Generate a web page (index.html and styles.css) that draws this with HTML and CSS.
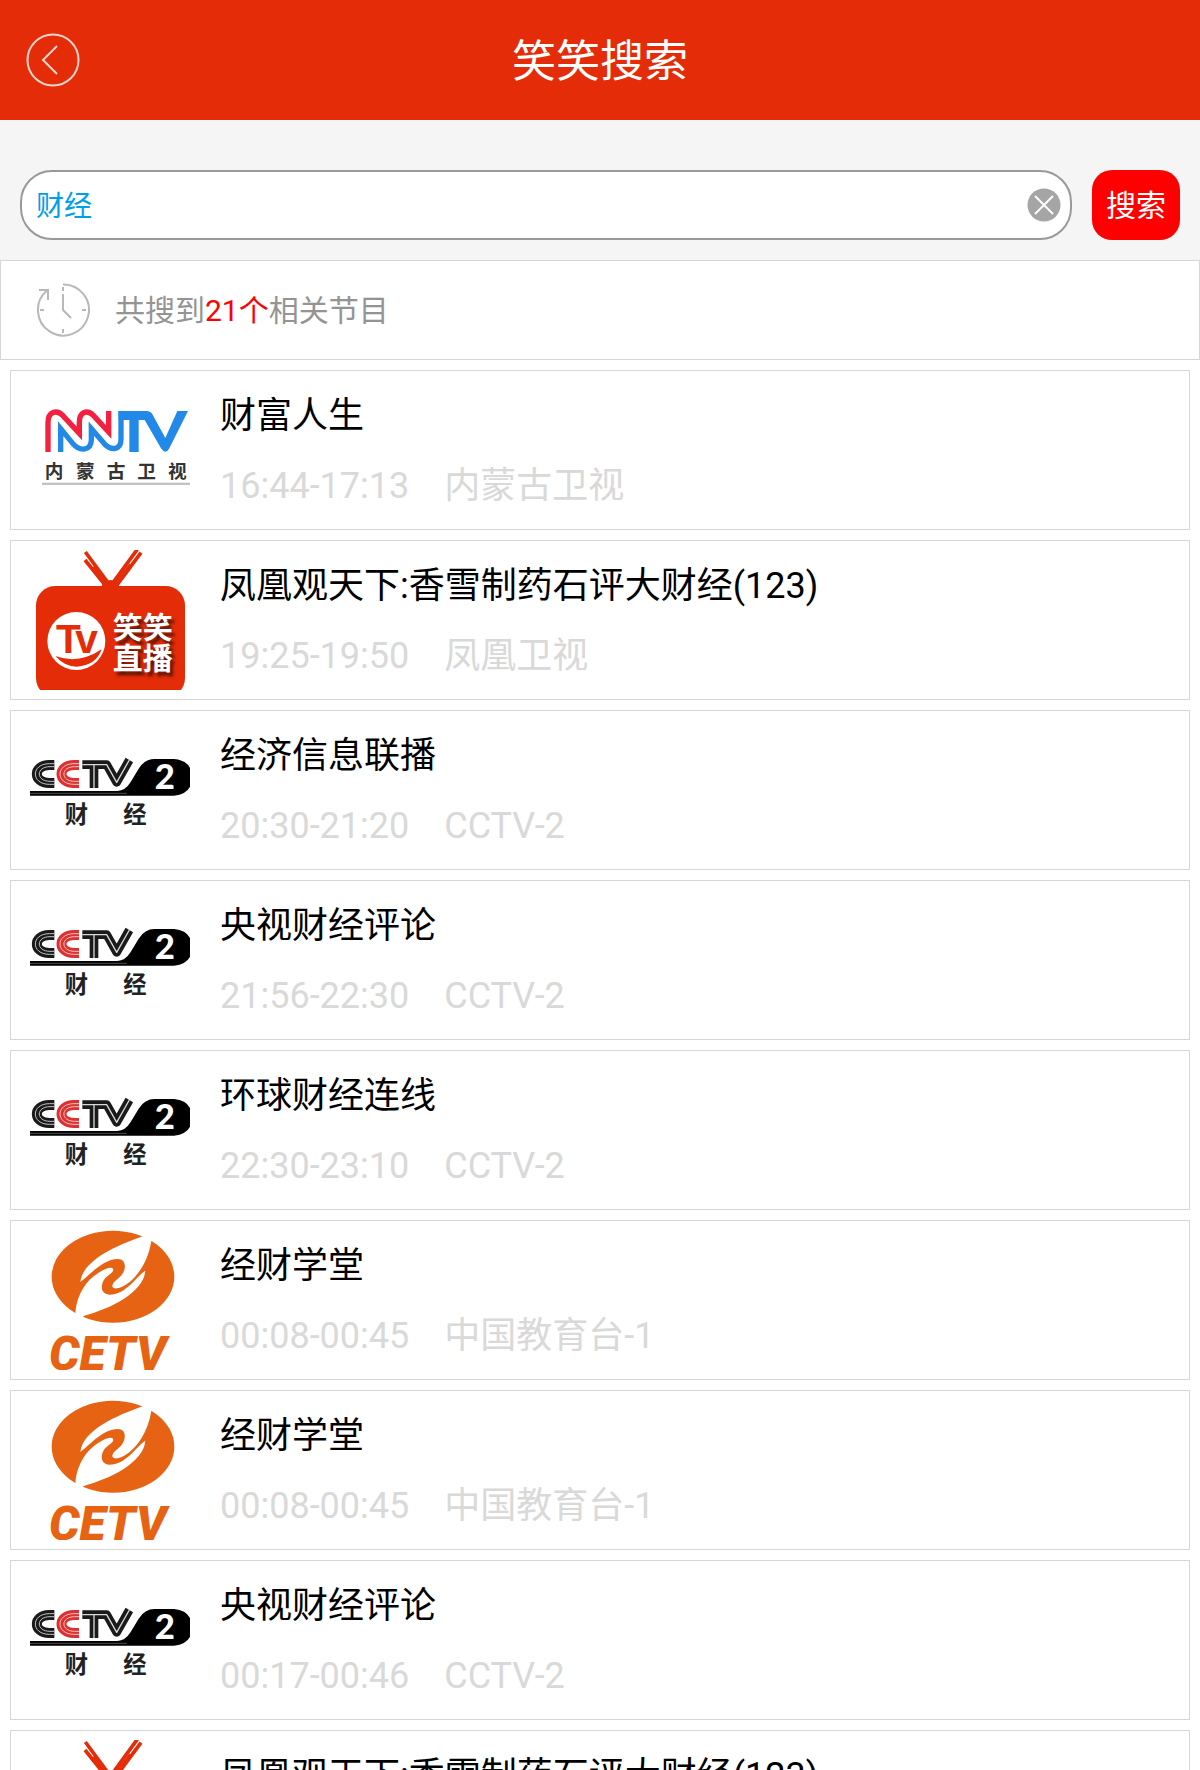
FILE: index.html
```html
<!DOCTYPE html>
<html lang="zh-CN">

    <head>
        <meta charset="UTF-8">
        <meta name="viewport" content="width=device-width, initial-scale=1.0">
        <title>笑笑搜索</title>
        <link rel="stylesheet" href="styles.css">
    </head>

    <body>
        <!-- channel logos -->
        <svg class="sprite" aria-hidden="true">
            <symbol id="nmtv" viewBox="0 0 480 420">
                <g fill="none" stroke-width="16">
                    <path stroke="#f5203f" d="M54 216 V128 C54 94 80 88 98 106 L148 160 V128 C148 94 172 88 190 106 L236 156 V93"/>
                    <path stroke="#2389e8" d="M92 216 V146 L128 190 C150 216 184 212 184 180 V146 L222 190 C244 214 273 210 273 178 V93"/>
                </g>
                <path fill="#2389e8" d="M266 93 H350 Q362 93 368 104 L406 174 L442 93 H474 L418 205 Q407 226 393 205 L344 120 H326 V216 H298 V120 H266 Z"/>
                <g class="nmtv-name">
                    <text x="44" y="293">内</text>
                    <text x="138" y="293">蒙</text>
                    <text x="230" y="293">古</text>
                    <text x="322" y="293">卫</text>
                    <text x="414" y="293">视</text>
                </g>
                <rect x="36" y="308" width="444" height="7" fill="#c2c2c2"/>
            </symbol>

            <symbol id="xiaoxiao" viewBox="0 0 480 420">
                <g stroke="#e42c09" fill="none">
                    <path stroke-width="11" d="M166 6 L238 104 M165 30 L226 106 M322 -2 L246 102 M333 8 L260 106"/>
                    <path stroke-width="6" d="M190 50 L232 106 M300 42 L252 104"/>
                </g>
                <path fill="#e42c09" d="M214 110 Q222 90 242 90 Q262 90 268 110 Z"/>
                <rect x="18" y="108" width="447" height="334" rx="58" fill="#e42c09"/>
                <circle cx="139" cy="273" r="87" fill="#fff"/>
                <path fill="#e42c09" d="M76 318 Q146 344 215 298 Q199 346 140 350 Q104 350 76 318 Z"/>
                <g class="tv-mark">
                    <text x="78" y="310">T</text>
                    <text x="136" y="310">v</text>
                </g>
                <g class="xiaoxiao-name">
                    <text x="248" y="263">笑笑</text>
                    <text x="248" y="357">直播</text>
                </g>
            </symbol>

            <symbol id="cctv2" viewBox="0 0 480 420">
                <path fill="#000" d="M0 213 H262 Q286 212 302 186 L326 146 Q344 117 374 117 H432 Q486 122 486 172 Q486 222 432 227 H0 Z"/>
                <path stroke="#777" stroke-width="2" d="M0 220 H290"/>
                <g fill="none" stroke-linejoin="round">
                    <path stroke="#1a1a1a" stroke-width="30" d="M73 135 H58 C8 135 8 189 58 189 H73"/>
                    <path stroke="#c4c4c4" stroke-width="3" d="M73 131 H58 C2 131 2 193 58 193 H73 M73 140 H60 C17 140 17 184 60 184 H73"/>
                    <path stroke="#dd3030" stroke-width="30" d="M147 135 H132 C82 135 82 189 132 189 H147"/>
                    <path stroke="#f3c4c4" stroke-width="3" d="M147 131 H132 C76 131 76 193 132 193 H147 M147 140 H134 C91 140 91 184 134 184 H147"/>
                    <path stroke="#1a1a1a" stroke-width="26" d="M157 134 H230 L260 187 L298 120 M192 134 V204"/>
                    <path stroke="#d8d8d8" stroke-width="4" d="M157 134 H230 L260 187 L298 120 M192 134 V204"/>
                </g>
                <text x="374" y="206" class="cctv-number">2</text>
                <g class="cctv-name">
                    <text x="104" y="308">财</text>
                    <text x="280" y="308">经</text>
                </g>
            </symbol>

            <symbol id="cetv" viewBox="0 0 480 420">
                <ellipse cx="249" cy="140" rx="184" ry="138" fill="#e66313"/>
                <path fill="#fff" d="M350 14 L338 19 C262 46 158 90 151 156 C180 134 220 87 263 87 C292 87 288 122 273 137 C260 151 247 156 247 169 C250 181 276 174 294 160 C322 139 354 96 364 33 L378 22 Z"/>
                <path fill="#fff" d="M346 122 C317 141 288 194 238 194 C208 192 212 160 226 144 C242 130 252 126 249 117 C241 106 211 124 192 138 C158 164 138 208 136 250 L128 262 L150 272 L161 258 C238 236 340 190 346 122 Z"/>
                <text x="57" y="420" class="cetv-name">CETV</text>
            </symbol>
        </svg>

        <header class="header">
            <button class="back" aria-label="返回">
                <svg viewBox="0 0 54 54">
                    <circle cx="27" cy="27" r="25.5"/>
                    <path d="M31 13 L17 27 L31 41"/>
                </svg>
            </button>
            <h1>笑笑搜索</h1>
        </header>

        <form class="search">
            <div class="field">
                <input type="text" value="财经" aria-label="搜索节目">
                <button type="button" class="clear" aria-label="清除">
                    <svg viewBox="0 0 34 34">
                        <circle cx="17" cy="17" r="16.5"/>
                        <path d="M8 8 L26 26 M26 8 L8 26"/>
                    </svg>
                </button>
            </div>
            <button type="button" class="submit">搜索</button>
        </form>

        <div class="summary">
            <svg viewBox="0 0 54 54">
                <path d="M27 1.5 A25.5 25.5 0 1 1 11 7.5 M3 7 H12 V17"/>
                <path d="M27 4 V8 M27 11 V27 L35 35 M27 46 V50 M4 27 H8 M46 27 H50"/>
            </svg>
            <p>共搜到<em>21个</em>相关节目</p>
        </div>

        <ul class="list">
            <li class="item">
                <svg class="logo"><use href="#nmtv"/></svg>
                <div class="info">
                    <h2>财富人生</h2>
                    <p><span>16:44-17:13</span><span>内蒙古卫视</span></p>
                </div>
            </li>
            <li class="item">
                <svg class="logo"><use href="#xiaoxiao"/></svg>
                <div class="info">
                    <h2>凤凰观天下:香雪制药石评大财经(123)</h2>
                    <p><span>19:25-19:50</span><span>凤凰卫视</span></p>
                </div>
            </li>
            <li class="item">
                <svg class="logo"><use href="#cctv2"/></svg>
                <div class="info">
                    <h2>经济信息联播</h2>
                    <p><span>20:30-21:20</span><span>CCTV-2</span></p>
                </div>
            </li>
            <li class="item">
                <svg class="logo"><use href="#cctv2"/></svg>
                <div class="info">
                    <h2>央视财经评论</h2>
                    <p><span>21:56-22:30</span><span>CCTV-2</span></p>
                </div>
            </li>
            <li class="item">
                <svg class="logo"><use href="#cctv2"/></svg>
                <div class="info">
                    <h2>环球财经连线</h2>
                    <p><span>22:30-23:10</span><span>CCTV-2</span></p>
                </div>
            </li>
            <li class="item">
                <svg class="logo"><use href="#cetv"/></svg>
                <div class="info">
                    <h2>经财学堂</h2>
                    <p><span>00:08-00:45</span><span>中国教育台-1</span></p>
                </div>
            </li>
            <li class="item">
                <svg class="logo"><use href="#cetv"/></svg>
                <div class="info">
                    <h2>经财学堂</h2>
                    <p><span>00:08-00:45</span><span>中国教育台-1</span></p>
                </div>
            </li>
            <li class="item">
                <svg class="logo"><use href="#cctv2"/></svg>
                <div class="info">
                    <h2>央视财经评论</h2>
                    <p><span>00:17-00:46</span><span>CCTV-2</span></p>
                </div>
            </li>
            <li class="item">
                <svg class="logo"><use href="#xiaoxiao"/></svg>
                <div class="info">
                    <h2>凤凰观天下:香雪制药石评大财经(123)</h2>
                    <p><span>19:25-19:50</span><span>凤凰卫视</span></p>
                </div>
            </li>
        </ul>
    </body>

</html>
```

FILE: styles.css
```css
* {
    box-sizing: border-box;
}

body {
    margin: 0;
    background: #fff;
    color: #000;
    font-family: Roboto, "Noto Sans CJK SC", sans-serif;
}

html {
    scrollbar-width: none;
}

h1,
h2,
p,
ul {
    margin: 0;
    padding: 0;
    font-weight: normal;
}

button {
    padding: 0;
    border: none;
    background: none;
    font-family: inherit;
    cursor: pointer;
}

svg {
    display: block;
}

.sprite {
    display: none;
}

/* header */
.header {
    display: grid;
    grid-template-columns: 54px 1fr 54px;
    align-items: center;
    height: 120px;
    padding: 0 26px;
    background: #e42c09;
    color: #fff;
}

.header h1 {
    padding-top: 4px;
    font-size: 44px;
    line-height: 64px;
    text-align: center;
}

.back svg {
    width: 54px;
    height: 54px;
    fill: none;
    stroke: #fff;
    stroke-width: 2;
    stroke-opacity: 0.8;
}

/* search box */
.search {
    display: flex;
    gap: 20px;
    padding: 50px 20px 20px;
    background: #f5f5f5;
}

.field {
    position: relative;
    flex: 1;
}

.field input {
    display: block;
    width: 100%;
    height: 70px;
    padding: 0 60px 2px 14px;
    border: 2px solid #999;
    border-radius: 32px;
    outline: none;
    background: #fff;
    color: #00a0e9;
    font-family: inherit;
    font-size: 28px;
}

.clear {
    position: absolute;
    top: 18px;
    right: 11px;
}

.clear svg {
    width: 34px;
    height: 34px;
    fill: #a5a5a5;
}

.clear path {
    stroke: #fff;
    stroke-width: 2;
}

.submit {
    width: 88px;
    height: 70px;
    padding-bottom: 4px;
    border-radius: 20px;
    background: #f00;
    color: #fff;
    font-size: 30px;
}

/* result count */
.summary {
    display: flex;
    align-items: center;
    gap: 25px;
    height: 100px;
    padding: 0 35px;
    border: 1px solid #d7d7d7;
    color: #949494;
    font-size: 30px;
}

.summary svg {
    width: 54px;
    height: 54px;
    fill: none;
    stroke: #b8b8b8;
    stroke-width: 2;
}

.summary p {
    padding-bottom: 4px;
}

.summary em {
    color: #f00;
    font-style: normal;
}

/* programme list */
.list {
    display: flex;
    flex-direction: column;
    gap: 10px;
    padding: 10px;
    list-style: none;
}

.item {
    display: flex;
    gap: 30px;
    height: 160px;
    padding: 9px 19px;
    border: 1px solid #d7d7d7;
}

.logo {
    flex: none;
    width: 160px;
    height: 140px;
}

.info {
    display: flex;
    flex-direction: column;
    gap: 18px;
    padding-top: 10px;
}

.info h2,
.info p {
    font-size: 36px;
    line-height: 52px;
    white-space: nowrap;
}

.info p {
    display: flex;
    gap: 35px;
    color: #d9d9d9;
}

/* lettering inside the logos */
.nmtv-name,
.cctv-name,
.xiaoxiao-name {
    font-family: "Noto Sans CJK SC", sans-serif;
    font-weight: bold;
}

.nmtv-name {
    fill: #333;
    font-size: 56px;
}

.cctv-name {
    fill: #222;
    font-size: 70px;
}

.cctv-number {
    fill: #fff;
    font-family: Lato, sans-serif;
    font-size: 104px;
    font-weight: 900;
}

.xiaoxiao-name {
    fill: #fff;
    font-size: 90px;
    text-shadow: 3px 4px 3px #5a1608;
}

.tv-mark {
    fill: #e42c09;
    font-family: "Liberation Sans", sans-serif;
    font-size: 122px;
    font-weight: bold;
}

.cetv-name {
    fill: #e66313;
    font-family: Roboto, sans-serif;
    font-size: 144px;
    font-style: italic;
    font-weight: 900;
}
```
